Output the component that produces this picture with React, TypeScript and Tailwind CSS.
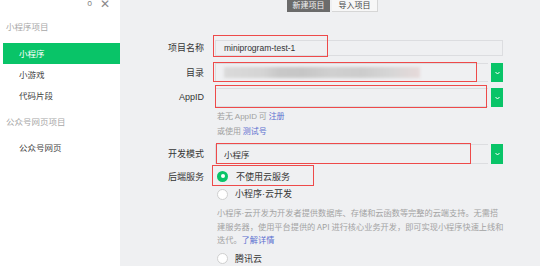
import React from "react";

function GreenBtn({ h }: { h: string }) {
  return (
    <div className={`w-[12px] ${h} bg-[#09c468] flex items-center justify-center shrink-0`}>
      <svg width="5" height="4" viewBox="0 0 5 4">
        <path d="M0.5 1 L2.5 3 L4.5 1" stroke="#ffffff" strokeWidth="1" fill="none" />
      </svg>
    </div>
  );
}

function Radio({ checked }: { checked?: boolean }) {
  if (checked) {
    return (
      <div className="w-[11px] h-[11px] rounded-full bg-[#09c468] flex items-center justify-center shrink-0">
        <div className="w-[4px] h-[4px] rounded-full bg-white" />
      </div>
    );
  }
  return <div className="w-[11px] h-[11px] rounded-full bg-white border border-[#cfcfcf] shrink-0" />;
}

const Dot = () => <span className="font-['Liberation_Sans',sans-serif]">·</span>;

export default function App() {
  return (
    <div className="relative w-[540px] h-[266px] overflow-hidden flex font-['Noto_Sans_CJK_SC','Noto_Sans',sans-serif] text-[#353535]">
      {/* Sidebar */}
      <div className="w-[120px] h-full bg-white shrink-0 flex flex-col">
        <div className="h-[12px] flex items-start justify-end pr-[10px] gap-[8px] text-[#8a8a8a] -mt-[3px]">
          <span className="text-[8px] leading-[12px]">o</span>
          <span className="text-[12px] leading-[12px] font-light">✕</span>
        </div>
        <div className="mt-[11px] pl-[6px] text-[8.5px] leading-[12px] text-[#a8a8a8]">小程序项目</div>
        <div className="mt-[11px] ml-[3px] h-[21px] bg-[#09c468] text-white text-[8.5px] flex items-center pl-[16px]">小程序</div>
        <div className="mt-[4px] pl-[19px] text-[8.5px] leading-[12px] text-[#444]">小游戏</div>
        <div className="mt-[9px] pl-[19px] text-[8.5px] leading-[12px] text-[#444]">代码片段</div>
        <div className="mt-[14px] pl-[6px] text-[8.5px] leading-[12px] text-[#a8a8a8]">公众号网页项目</div>
        <div className="mt-[14px] pl-[19px] text-[8.5px] leading-[12px] text-[#444]">公众号网页</div>
      </div>

      {/* Main */}
      <div className="flex-1 h-full bg-[#eff0f2] flex flex-col">
        {/* tabs */}
        <div className="h-[12px] flex pl-[167px]">
          <div className="w-[43px] h-[12px] bg-[#6b6b6b] text-[#f2f2f2] text-[8px] leading-[9px] text-center">新建项目</div>
          <div className="ml-[2px] w-[46px] h-[12px] bg-[#f7f7f7] border-r border-b border-[#d6d6d6] text-[#444] text-[8px] leading-[9px] text-center">导入项目</div>
        </div>

        {/* 项目名称 */}
        <div className="mt-[28px] flex items-center h-[16px]">
          <div className="w-[84px] text-right text-[9px]">项目名称</div>
          <div className="ml-[11px] w-[288px] h-[16px] border border-[#dcdde0] flex items-center pl-[8px] text-[8.5px] font-['Liberation_Sans',sans-serif] text-[#333]">
            miniprogram-test-1
          </div>
        </div>

        {/* 目录 */}
        <div className="mt-[7px] flex items-center h-[19px]">
          <div className="w-[84px] text-right text-[9px]">目录</div>
          <div className="ml-[11px] w-[288px] h-[19px] flex">
            <div className="flex-1 border-t border-b border-l border-[#dcdde0] flex items-center pl-[8px]">
              <div className="w-[196px] h-[11px] blur-[1.5px] bg-[linear-gradient(90deg,#dadada_0%,#d4d4d4_20%,#c8c8c8_28%,#c6c6c6_40%,#d0d0d0_55%,#cccccc_70%,#d6d6d6_85%,#e6dada_100%)]" />
            </div>
            <div className="w-[3px]" />
            <GreenBtn h="h-[19px]" />
          </div>
        </div>

        {/* AppID */}
        <div className="mt-[6px] flex items-center h-[19px]">
          <div className="w-[84px] text-right text-[9px] font-['Liberation_Sans',sans-serif]">AppID</div>
          <div className="ml-[11px] w-[288px] h-[19px] flex">
            <div className="flex-1 border-t border-b border-l border-[#dcdde0]" />
            <div className="w-[3px]" />
            <GreenBtn h="h-[19px]" />
          </div>
        </div>

        {/* hint */}
        <div className="mt-[2px] pl-[97px] text-[8px] leading-[14px] text-[#a0a0a0]">
          <div>
            若无 <span className="font-['Liberation_Sans',sans-serif]">AppID</span> 可 <span className="text-[#5b6fd0]">注册</span>
          </div>
          <div>
            或使用 <span className="text-[#5b6fd0]">测试号</span>
          </div>
        </div>

        {/* 开发模式 */}
        <div className="mt-[6px] flex items-center h-[20px]">
          <div className="w-[84px] text-right text-[9px]">开发模式</div>
          <div className="ml-[11px] w-[288px] h-[20px] flex">
            <div className="flex-1 border-t border-b border-l border-[#dcdde0] flex items-center pl-[8px] text-[8.5px]">小程序</div>
            <div className="w-[3px]" />
            <GreenBtn h="h-[20px]" />
          </div>
        </div>

        {/* 后端服务 */}
        <div className="mt-[5px] flex items-center h-[16px]">
          <div className="w-[84px] text-right text-[9px]">后端服务</div>
          <div className="ml-[13px] flex items-center">
            <Radio checked />
            <span className="ml-[8px] text-[9px]">不使用云服务</span>
          </div>
        </div>
        <div className="mt-[3px] flex items-center h-[16px] pl-[97px]">
          <Radio />
          <span className="ml-[7px] text-[9px]">小程序<Dot />云开发</span>
        </div>
        <div className="mt-[4px] pl-[97px] w-[386px] text-[8.2px] leading-[12.5px] text-[#a3a3a3]">
          小程序<Dot />云开发为开发者提供数据库、存储和云函数等完整的云端支持。无需搭建服务器，使用平台提供的 API 进行核心业务开发，即可实现小程序快速上线和迭代。<span className="text-[#5b6fd0]">了解详情</span>
        </div>
        <div className="mt-[6px] flex items-center h-[16px] pl-[97px]">
          <Radio />
          <span className="ml-[7px] text-[9px]">腾讯云</span>
        </div>
      </div>

      {/* red annotation boxes */}
      <div className="absolute left-[213px] top-[35px] w-[115px] h-[22px] border border-[#ee4a4a]" />
      <div className="absolute left-[213px] top-[62px] w-[264px] h-[20px] border border-[#ee4a4a]" />
      <div className="absolute left-[215px] top-[85px] w-[272px] h-[23px] border border-[#ee4a4a]" />
      <div className="absolute left-[216px] top-[143px] w-[255px] h-[21px] border border-[#ee4a4a]" />
      <div className="absolute left-[212px] top-[165px] w-[102px] h-[21px] border border-[#ee4a4a]" />
    </div>
  );
}
